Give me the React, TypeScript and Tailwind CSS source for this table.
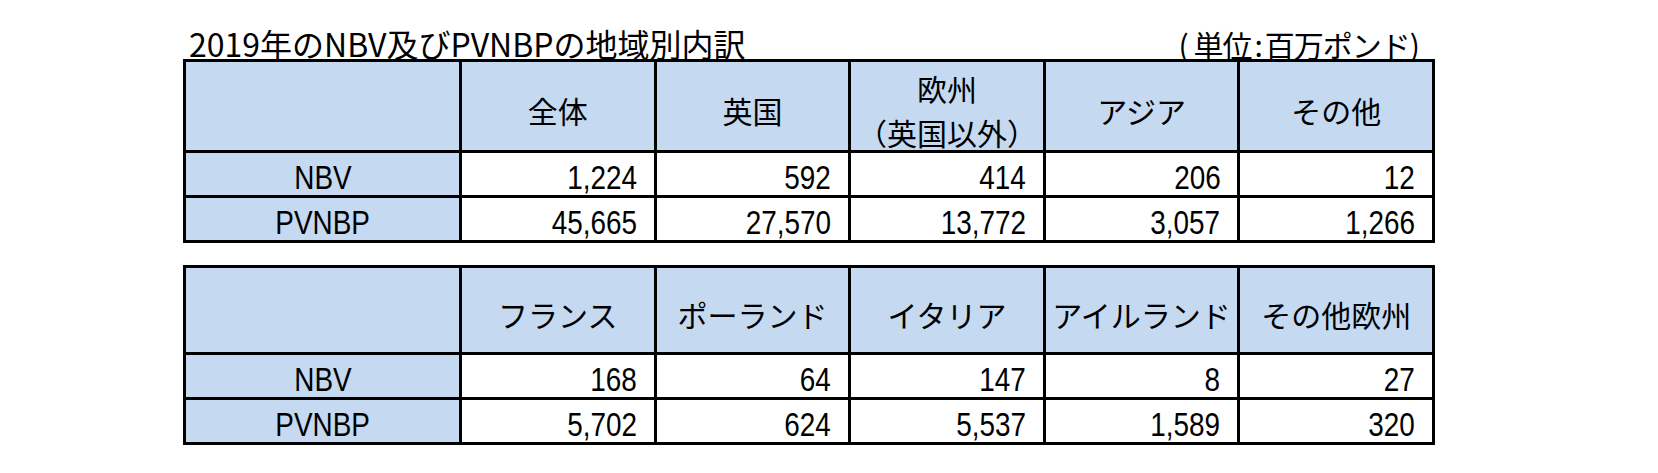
const cjk = { fontFamily: '"Noto Sans CJK JP", sans-serif' }
const latin = { fontFamily: '"Liberation Sans", "Noto Sans CJK JP", sans-serif' }

type Table = {
  headers: string[][]
  rows: { label: string; values: string[] }[]
  headerHeight: string
}

const tables: Table[] = [
  {
    headers: [['全体'], ['英国'], ['欧州', '（英国以外）'], ['アジア'], ['その他']],
    rows: [
      { label: 'NBV', values: ['1,224', '592', '414', '206', '12'] },
      { label: 'PVNBP', values: ['45,665', '27,570', '13,772', '3,057', '1,266'] },
    ],
    headerHeight: 'h-[88px]',
  },
  {
    headers: [['フランス'], ['ポーランド'], ['イタリア'], ['アイルランド'], ['その他欧州']],
    rows: [
      { label: 'NBV', values: ['168', '64', '147', '8', '27'] },
      { label: 'PVNBP', values: ['5,702', '624', '5,537', '1,589', '320'] },
    ],
    headerHeight: 'h-[84px]',
  },
]

function DataTable({ table }: { table: Table }) {
  return (
    <div className="grid grid-cols-[273px_repeat(5,1fr)] gap-[3px] bg-black p-[3px]">
      <div className={`${table.headerHeight} bg-[#c5d9f1]`} />
      {table.headers.map((lines, i) => (
        <div
          key={i}
          className={`${table.headerHeight} flex flex-col items-center justify-center bg-[#c5d9f1] pt-[8px] text-[30px] leading-[44px] text-black`}
          style={cjk}
        >
          {lines.map((l) => (
            <span key={l} className="whitespace-nowrap">
              {l}
            </span>
          ))}
        </div>
      ))}
      {table.rows.map((row) => (
        <div key={row.label} className="contents">
          <div
            className="flex h-[42px] items-center justify-center bg-[#c5d9f1] pt-[6px] text-[34px] leading-none text-black"
            style={latin}
          >
            <span className="inline-block origin-center scale-x-[0.82]">{row.label}</span>
          </div>
          {row.values.map((v, i) => (
            <div
              key={i}
              className="flex h-[42px] items-center justify-end bg-white pt-[6px] pr-[17px] text-[34px] leading-none text-black"
              style={latin}
            >
              <span className="inline-block origin-right scale-x-[0.82]">{v}</span>
            </div>
          ))}
        </div>
      ))}
    </div>
  )
}

export default function App() {
  return (
    <div className="h-[473px] w-[1658px] bg-white">
      <div className="ml-[183px] w-[1252px] pt-[24px]">
        <div className="flex h-[35px] items-end justify-between pr-[16px] pl-[6px] leading-none text-black" style={cjk}>
          <span className="text-[32px]">2019年のNBV及びPVNBPの地域別内訳</span>
          <span className="text-[30px] tracking-[-1px]">
            (<span className="ml-[6px]">単位</span>
            <span className="mx-[3px]">:</span>百万ポンド)
          </span>
        </div>
        <DataTable table={tables[0]} />
        <div className="h-[22px]" />
        <DataTable table={tables[1]} />
      </div>
    </div>
  )
}
